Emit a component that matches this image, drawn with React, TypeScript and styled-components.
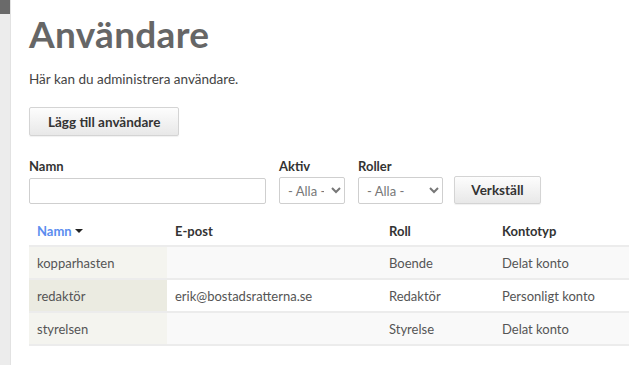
import React from "react";
import styled, { createGlobalStyle } from "styled-components";

const GlobalStyle = createGlobalStyle`
  html, body {
    margin: 0;
    padding: 0;
    background: #fff;
  }
  body {
    font-family: Lato, "Open Sans", sans-serif;
    color: #444;
  }
`;

interface User {
  name: string;
  email: string;
  role: string;
  account: string;
}

const users: User[] = [
  { name: "kopparhasten", email: "", role: "Boende", account: "Delat konto" },
  {
    name: "redaktör",
    email: "erik@bostadsratterna.se",
    role: "Redaktör",
    account: "Personligt konto",
  },
  { name: "styrelsen", email: "", role: "Styrelse", account: "Delat konto" },
];

const App = () => {
  return (
    <>
      <GlobalStyle />
      <Page>
        <Sidebar>
          <SidebarTop />
        </Sidebar>
        <Main>
          <Title>Användare</Title>
          <Intro>Här kan du administrera användare.</Intro>
          <Button>Lägg till användare</Button>
          <Filters>
            <Field>
              <Label>Namn</Label>
              <TextInput />
            </Field>
            <Field>
              <Label>Aktiv</Label>
              <Select $width={66}>
                <option>- Alla -</option>
              </Select>
            </Field>
            <Field>
              <Label>Roller</Label>
              <Select $width={85}>
                <option>- Alla -</option>
              </Select>
            </Field>
            <ApplyButton>Verkställ</ApplyButton>
          </Filters>
          <Table>
            <colgroup>
              <col style={{ width: 138 }} />
              <col style={{ width: 214 }} />
              <col style={{ width: 113 }} />
              <col />
            </colgroup>
            <thead>
              <tr>
                <Th>
                  <SortLink>
                    Namn <Caret />
                  </SortLink>
                </Th>
                <Th>E-post</Th>
                <Th>Roll</Th>
                <Th>Kontotyp</Th>
              </tr>
            </thead>
            <tbody>
              {users.map((u, i) => (
                <Row key={u.name} $odd={i % 2 === 0}>
                  <NameCell $odd={i % 2 === 0}>{u.name}</NameCell>
                  <Td>{u.email}</Td>
                  <Td>{u.role}</Td>
                  <Td>{u.account}</Td>
                </Row>
              ))}
            </tbody>
          </Table>
        </Main>
      </Page>
    </>
  );
};

export default App;

const Page = styled.div`
  display: flex;
  width: 629px;
  height: 365px;
  overflow: hidden;
`;

const Sidebar = styled.div`
  width: 10px;
  flex-shrink: 0;
  background: #ececec;
  border-right: 1px solid #e2e2e2;
`;

const SidebarTop = styled.div`
  height: 14px;
  background: #6a6a6a;
`;

const Main = styled.div`
  flex: 1;
  padding: 10px 0 0 18px;
  min-width: 0;
`;

const Title = styled.h1`
  margin: 0;
  font-size: 37px;
  font-weight: 700;
  color: #666;
  line-height: 48px;
  letter-spacing: 0.3px;
`;

const Intro = styled.p`
  margin: 12px 0 0;
  font-size: 13.5px;
  line-height: 18px;
  color: #444;
`;

const Button = styled.button`
  display: block;
  margin-top: 19px;
  height: 29px;
  padding: 0 18px;
  font-family: inherit;
  font-size: 13.5px;
  font-weight: 700;
  color: #333;
  border: 1px solid #d4d4d4;
  border-radius: 2px;
  background: linear-gradient(#fdfdfd, #e8e8e8);
  box-shadow: 0 1px 1px rgba(0, 0, 0, 0.06);
`;

const Filters = styled.div`
  display: flex;
  align-items: flex-end;
  gap: 13px;
  margin-top: 22px;
`;

const Field = styled.div`
  display: flex;
  flex-direction: column;
`;

const Label = styled.label`
  font-size: 13px;
  font-weight: 700;
  color: #333;
  line-height: 16px;
  margin-bottom: 3px;
`;

const TextInput = styled.input`
  width: 237px;
  height: 26px;
  box-sizing: border-box;
  border: 1px solid #cfcfcf;
  border-radius: 2px;
  margin-top: 1px;
`;

const Select = styled.select<{ $width: number }>`
  width: ${(p) => p.$width}px;
  height: 27px;
  box-sizing: border-box;
  font-family: inherit;
  font-size: 13px;
  color: #777;
  border: 1px solid #cfcfcf;
  border-radius: 2px;
  background: #fff;
  padding: 0 4px;
`;

const ApplyButton = styled(Button)`
  margin-top: 0;
  margin-left: -2px;
  height: 28px;
  width: 87px;
  padding: 0;
`;

const Table = styled.table`
  margin-top: 13px;
  width: 600px;
  table-layout: fixed;
  border-collapse: collapse;
  font-size: 13px;
`;

const Th = styled.th`
  text-align: left;
  font-weight: 700;
  color: #333;
  height: 28px;
  padding: 0 8px;
  border-bottom: 2px solid #ececec;
  white-space: nowrap;
`;

const SortLink = styled.span`
  color: #5b8def;
  display: inline-flex;
  align-items: center;
  gap: 3px;
`;

const Caret = styled.span`
  display: inline-block;
  width: 0;
  height: 0;
  border-left: 4px solid transparent;
  border-right: 4px solid transparent;
  border-top: 4px solid #222;
`;

const Row = styled.tr<{ $odd: boolean }>`
  background: ${(p) => (p.$odd ? "#f9f9f9" : "#fff")};
  border-bottom: 2px solid #ececec;
`;

const Td = styled.td`
  height: 31px;
  padding: 0 8px;
  color: #555;
  white-space: nowrap;
`;

const NameCell = styled(Td)<{ $odd: boolean }>`
  background: ${(p) => (p.$odd ? "#f4f4ef" : "#ebebe1")};
`;
